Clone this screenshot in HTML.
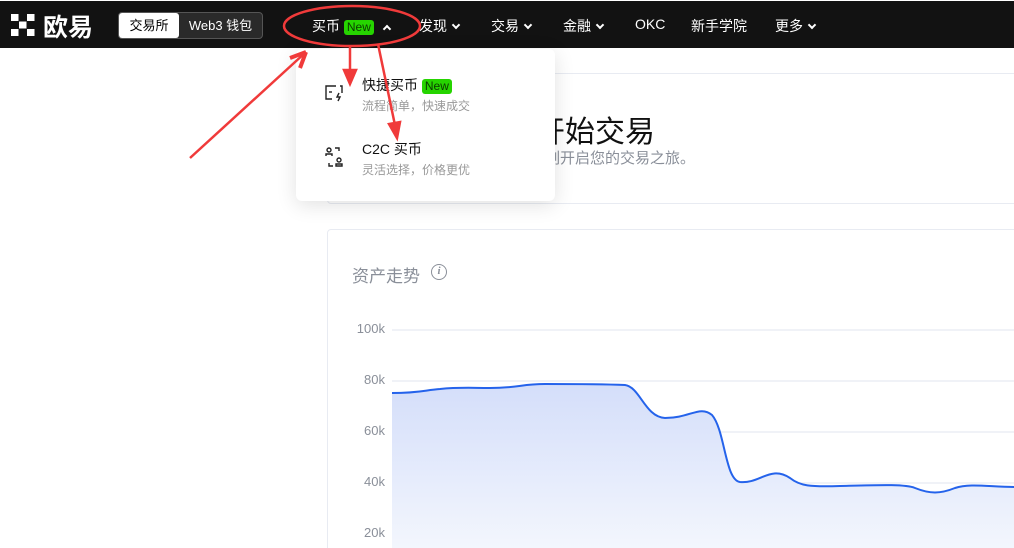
<!DOCTYPE html>
<html><head><meta charset="utf-8"><style>
*{margin:0;padding:0;box-sizing:border-box}
html,body{width:1014px;height:548px;overflow:hidden}
body{background:#fff;font-family:"Liberation Sans","Noto Sans CJK SC",sans-serif;position:relative}
.nav{position:absolute;left:0;top:1px;width:1014px;height:47px;background:#121212;color:#fff}
.nav .it{position:absolute;top:15px;font-size:14px;color:#fff}
.chev{display:inline-block;width:6px;height:6px;border-right:2px solid #fff;border-bottom:2px solid #fff;transform:rotate(45deg);margin-left:6px;position:relative;top:-3px}
.seg{position:absolute;left:118px;top:11px;width:145px;height:27px;border:1px solid #555;border-radius:4px;background:#2a2a2a;font-size:13px}
.card{position:absolute;border:1px solid #e8ebf2;border-radius:4px;background:#fff}
.dd{position:absolute;left:296px;top:49px;width:259px;height:152px;background:#fff;border-radius:6px;box-shadow:0 4px 20px rgba(0,0,0,.12)}
.new{background:#26d400;color:#000;font-size:12px;border-radius:3px;padding:0 3px;line-height:15px;display:inline-block}
.ylab{position:absolute;left:340px;width:45px;text-align:right;font-size:13px;color:#8a8f99}
</style></head><body>
<div class="nav">
 <svg style="position:absolute;left:11px;top:13px" width="24" height="22" viewBox="0 0 24 22"><g fill="#fff"><rect x="0" y="0" width="7.5" height="7"/><rect x="16" y="0" width="7.5" height="7"/><rect x="8" y="7.5" width="7.5" height="7"/><rect x="0" y="15" width="7.5" height="7"/><rect x="16" y="15" width="7.5" height="7"/></g></svg>
 <div style="position:absolute;left:43px;top:7px;font-size:25px;font-weight:bold;color:#fff">欧易</div>
 <div class="seg"><div style="position:absolute;left:0;top:0;width:60px;height:25px;background:#fff;border-radius:3px;color:#000;text-align:center;line-height:25px">交易所</div><div style="position:absolute;left:60px;top:0;width:83px;height:25px;color:#fff;text-align:center;line-height:25px">Web3 钱包</div></div>
 <div class="it" style="left:312px">买币 <span class="new" style="color:#0a3a00">New</span> <span class="chev" style="transform:rotate(225deg);top:1px"></span></div>
 <div class="it" style="left:419px">发现<span class="chev"></span></div>
 <div class="it" style="left:491px">交易<span class="chev"></span></div>
 <div class="it" style="left:563px">金融<span class="chev"></span></div>
 <div class="it" style="left:635px">OKC</div>
 <div class="it" style="left:691px">新手学院</div>
 <div class="it" style="left:775px">更多<span class="chev"></span></div>
</div>
<div class="card" style="left:327px;top:73px;width:700px;height:131px"></div>
<div style="position:absolute;left:535px;top:107px;font-size:30px;color:#111">开始交易</div>
<div style="position:absolute;left:530px;top:147px;font-size:15px;color:#8a8f99">立刻开启您的交易之旅。</div>
<div class="card" style="left:327px;top:229px;width:700px;height:330px"></div>
<div style="position:absolute;left:352px;top:262px;font-size:17px;color:#8a8f99">资产走势</div>
<div style="position:absolute;left:431px;top:264px;width:16px;height:16px;border:1.5px solid #8a8f99;border-radius:50%;font-size:11px;color:#8a8f99;text-align:center;line-height:13px;font-style:italic;font-family:'Liberation Serif',serif;font-weight:bold">i</div>
<div class="ylab" style="top:321px">100k</div>
<div class="ylab" style="top:372px">80k</div>
<div class="ylab" style="top:423px">60k</div>
<div class="ylab" style="top:474px">40k</div>
<div class="ylab" style="top:525px">20k</div>
<svg style="position:absolute;left:0;top:0" width="1014" height="548">
<defs><linearGradient id="g" x1="0" y1="0" x2="0" y2="1"><stop offset="0" stop-color="#d4defa"/><stop offset="1" stop-color="#f3f6fd"/></linearGradient></defs>
<g stroke="#e1e5ef" stroke-width="1"><line x1="392" y1="330" x2="1014" y2="330"/><line x1="392" y1="381" x2="1014" y2="381"/><line x1="392" y1="432" x2="1014" y2="432"/><line x1="392" y1="483" x2="1014" y2="483"/><line x1="392" y1="534" x2="1014" y2="534"/></g>
<path d="M392 393 C420 393 425 390 440 389 C460 387 470 388 490 388 C520 388 520 384 545 384 C580 384 600 384 625 385 C640 387 645 417 665 418 C690 418 700 405 712 415 C725 430 725 480 740 482 C760 484 770 465 790 478 C800 486 810 487 840 486 C880 485 905 484 915 488 C930 494 940 494 955 488 C970 483 990 487 1014 487 L1014 548 L392 548Z" fill="url(#g)"/>
<path d="M392 393 C420 393 425 390 440 389 C460 387 470 388 490 388 C520 388 520 384 545 384 C580 384 600 384 625 385 C640 387 645 417 665 418 C690 418 700 405 712 415 C725 430 725 480 740 482 C760 484 770 465 790 478 C800 486 810 487 840 486 C880 485 905 484 915 488 C930 494 940 494 955 488 C970 483 990 487 1014 487" fill="none" stroke="#2563eb" stroke-width="2"/>
</svg>
<div class="dd">
 <svg style="position:absolute;left:28px;top:34px" width="20" height="20" viewBox="0 0 20 20" fill="none" stroke="#222" stroke-width="1.4"><path d="M12 3H2v13h6M16 3h2v7"/><path d="M5 9h3"/><path d="M15 10l-2 4h3l-2 4"/></svg>
 <div style="position:absolute;left:66px;top:26px;font-size:14px;color:#111">快捷买币 <span class="new" style="color:#0a3a00">New</span></div>
 <div style="position:absolute;left:66px;top:48px;font-size:12px;color:#999">流程简单，快速成交</div>
 <svg style="position:absolute;left:28px;top:97px" width="20" height="22" viewBox="0 0 20 22" fill="none" stroke="#222" stroke-width="1.4"><circle cx="5" cy="4" r="2"/><path d="M2 10v-2h6v2"/><path d="M11 2h4v3"/><circle cx="15" cy="14" r="2"/><path d="M12 20v-2h6v2z"/><path d="M9 20H5v-3"/></svg>
 <div style="position:absolute;left:66px;top:90px;font-size:14px;color:#111">C2C 买币</div>
 <div style="position:absolute;left:66px;top:112px;font-size:12px;color:#999">灵活选择，价格更优</div>
</div>
<svg style="position:absolute;left:0;top:0" width="1014" height="548" fill="none" stroke="#f03a3a" stroke-width="2.5">
<ellipse cx="352" cy="26" rx="68" ry="20"/>
<path d="M190 158 L306 52"/><path d="M306 52 L290 58 M306 52 L300 68" stroke-width="4"/>
<path d="M350 45 L350 80"/><path d="M344 70 L350 84 L356 70Z" fill="#f03a3a"/>
<path d="M378 44 L396 130"/><path d="M389 124 L397 138 L400 122Z" fill="#f03a3a"/>
</svg>
</body></html>
